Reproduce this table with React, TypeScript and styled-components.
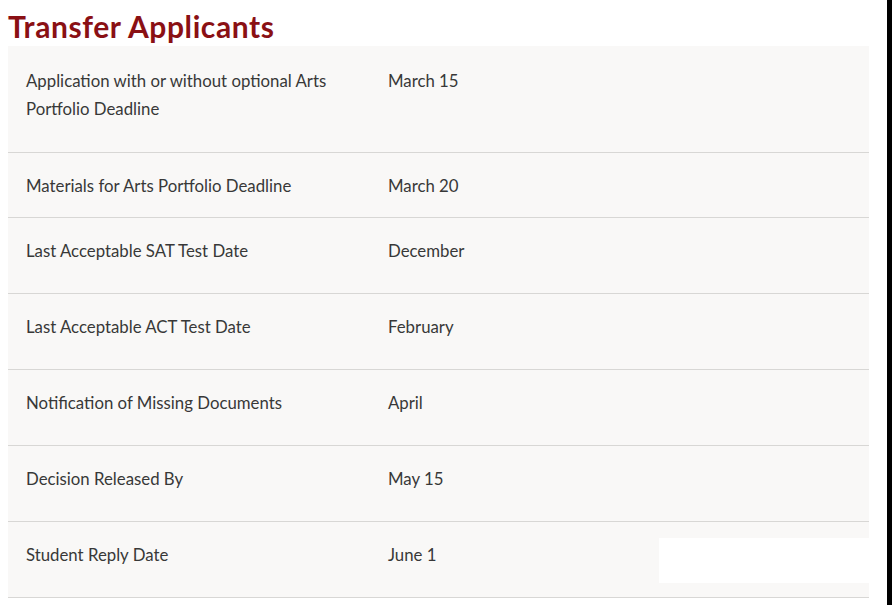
import React from 'react';
import styled, { createGlobalStyle } from 'styled-components';

const GlobalStyle = createGlobalStyle`
  html, body {
    margin: 0;
    padding: 0;
    background: #ffffff;
  }
  body {
    font-family: Lato, 'Liberation Sans', sans-serif;
  }
`;

// страница: контент слева, тёмная полоса справа
const Page = styled.div`
  display: flex;
  width: 892px;
  height: 605px;
  overflow: hidden;
`;

const Content = styled.main`
  flex: 1;
  padding: 0 18px 0 8px;
  position: relative;
`;

const EdgeStrip = styled.div`
  width: 5px;
  background: #000;
`;

const Title = styled.h2`
  margin: 0;
  padding-top: 8px;
  height: 46px;
  box-sizing: border-box;
  font-size: 30px;
  line-height: 36px;
  font-weight: 700;
  color: #8a1014;
  letter-spacing: 0.6px;
`;

const Table = styled.div`
  background: #f9f8f7;
`;

const Row = styled.div<{ $h: number; $top: number }>`
  display: grid;
  grid-template-columns: 362px 1fr;
  height: ${(p) => p.$h}px;
  box-sizing: border-box;
  padding-top: ${(p) => p.$top}px;
  border-bottom: 1px solid #d8d7d5;
`;

const Cell = styled.div`
  padding: 0 18px;
  font-size: 16.8px;
  line-height: 28px;
  color: #383838;
`;

// белая плашка поверх последней строки
const Cover = styled.div`
  position: absolute;
  left: 659px;
  top: 538px;
  width: 211px;
  height: 45px;
  background: #fff;
`;

const rows = [
  { label: 'Application with or without optional Arts Portfolio Deadline', value: 'March 15', h: 107, top: 21 },
  { label: 'Materials for Arts Portfolio Deadline', value: 'March 20', h: 65, top: 19 },
  { label: 'Last Acceptable SAT Test Date', value: 'December', h: 76, top: 19 },
  { label: 'Last Acceptable ACT Test Date', value: 'February', h: 76, top: 19 },
  { label: 'Notification of Missing Documents', value: 'April', h: 76, top: 19 },
  { label: 'Decision Released By', value: 'May 15', h: 76, top: 19 },
  { label: 'Student Reply Date', value: 'June 1', h: 76, top: 19 },
];

const App: React.FC = () => {
  return (
    <>
      <GlobalStyle />
      <Page>
        <Content>
          <Title>Transfer Applicants</Title>
          <Table>
            {rows.map((r) => (
              <Row key={r.label} $h={r.h} $top={r.top}>
                <Cell>{r.label}</Cell>
                <Cell>{r.value}</Cell>
              </Row>
            ))}
          </Table>
          <Cover />
        </Content>
        <EdgeStrip />
      </Page>
    </>
  );
};

export default App;
